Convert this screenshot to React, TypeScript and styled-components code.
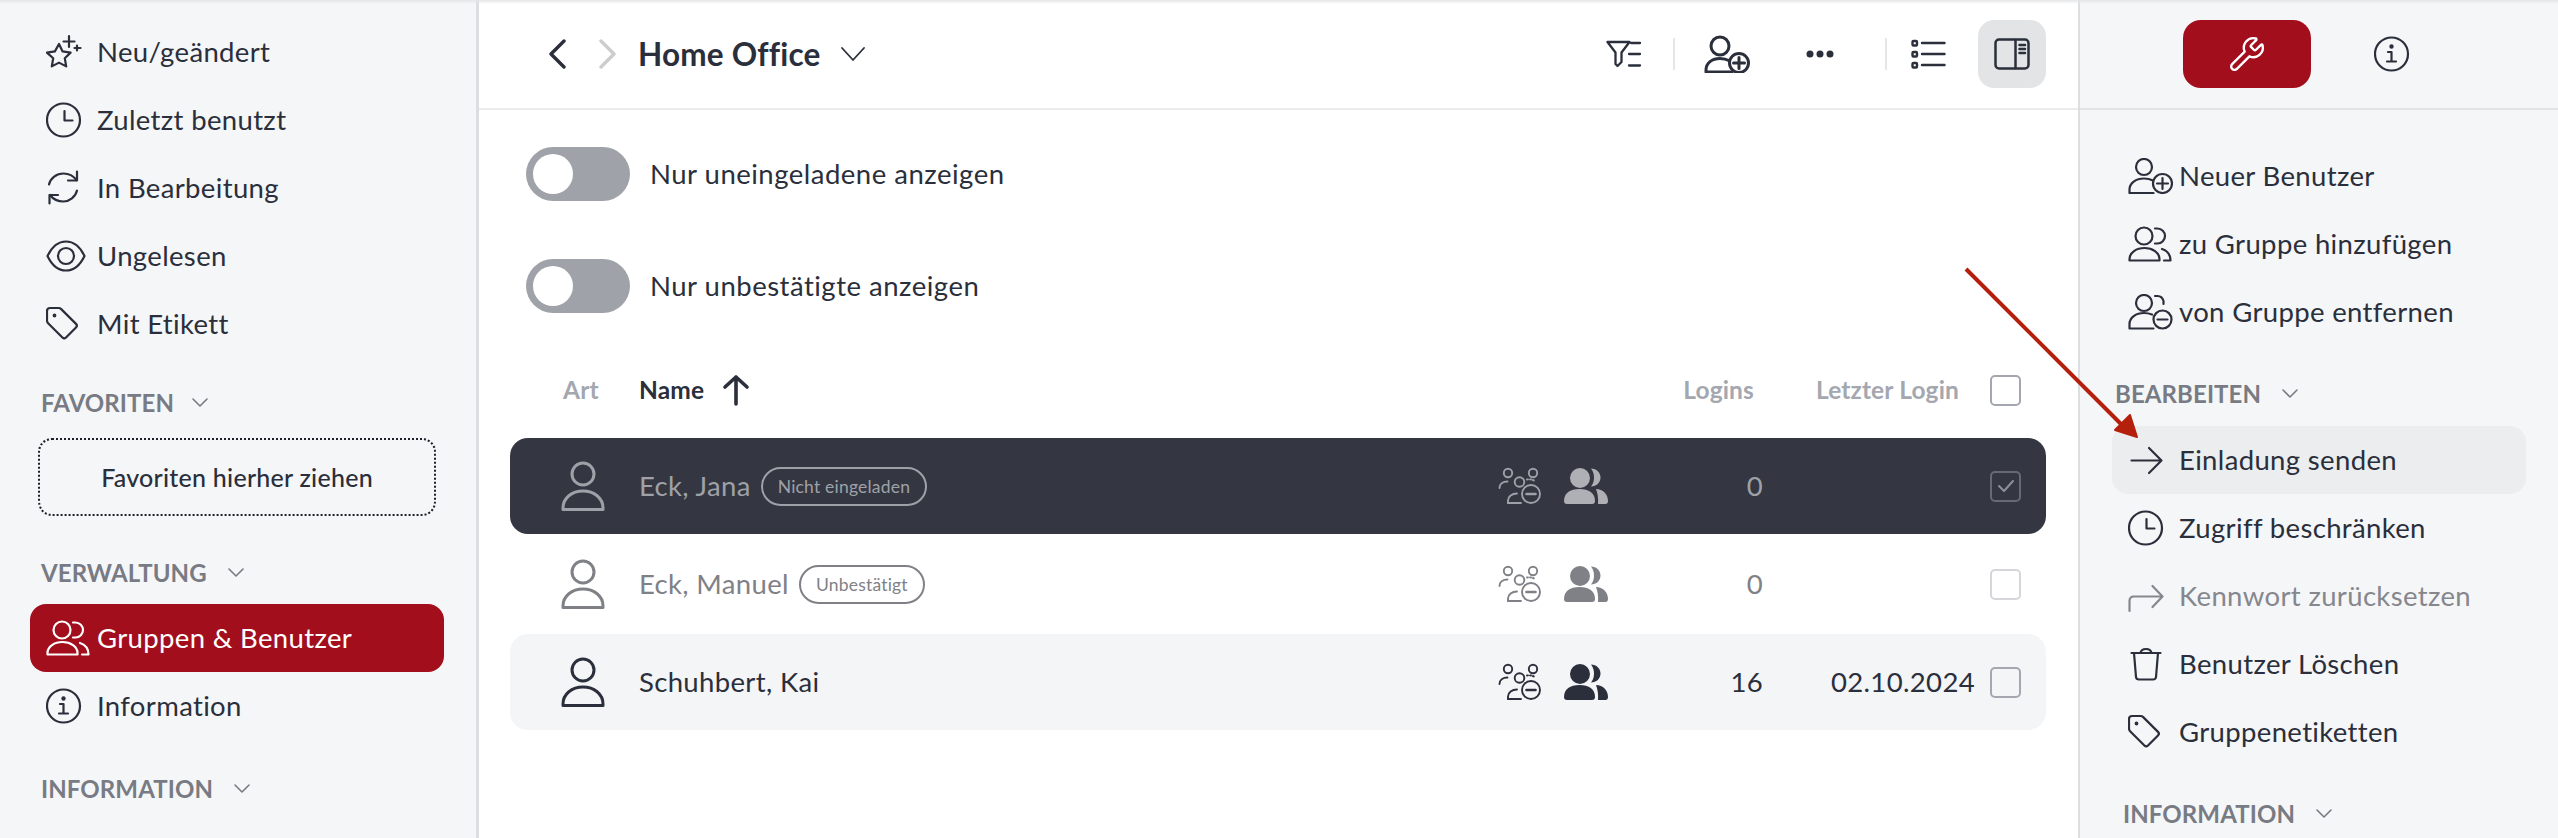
import React from "react";
import styled, { createGlobalStyle } from "styled-components";
import { Wrench } from "lucide-react";

const ink = "#2a2f3b";
const red = "#a30e1d";
const panel = "#f5f6f8";

const Global = createGlobalStyle`
  html, body { margin: 0; padding: 0; height: 100%; background: #fff; overflow: hidden; }
  body { font-family: "Lato", "Open Sans", "Liberation Sans", sans-serif; color: ${ink}; }
  * { box-sizing: border-box; }
  svg { display: block; flex: none; }
`;

const Page = styled.div`
  position: relative;
  display: grid;
  grid-template-columns: 479px 1599px 480px;
  width: 2558px;
  height: 838px;
  overflow: hidden;
`;
const TopShade = styled.div`
  position: absolute;
  left: 0; right: 0; top: 0;
  height: 4px;
  background: linear-gradient(#e4e5e7, rgba(228,229,231,0));
  pointer-events: none;
`;
const ArrowLayer = styled.svg`
  position: absolute;
  left: 1950px; top: 255px;
  pointer-events: none;
`;
const LeftBar = styled.aside`
  background: ${panel};
  border-right: 3px solid #dcdee1;
  padding-top: 18px;
`;
const RightBar = styled.aside`
  background: ${panel};
  border-left: 2px solid #dcdee1;
  padding-left: 2px;
`;
const Main = styled.main`
  background: #fff;
`;
const Item = styled.div<{ $active?: boolean; $hover?: boolean; $muted?: boolean }>`
  display: flex;
  align-items: center;
  height: 68px;
  margin-left: 30px;
  width: 414px;
  padding-left: 16px;
  border-radius: 16px;
  font-size: 27.5px;
  letter-spacing: 0.35px;
  background: ${p => (p.$active ? red : p.$hover ? "#ecedef" : "transparent")};
  color: ${p => (p.$active ? "#fff" : p.$muted ? "#85878d" : ink)};
`;
const ItemLabel = styled.span`
  margin-top: -2px;
`;
const IconBox = styled.span`
  display: flex;
  width: 51px;
  flex: none;
  align-items: center;
  justify-content: flex-start;
`;
const SectionHead = styled.div<{ $top: number; $bottom: number; $x: number; $gap: number }>`
  display: flex;
  align-items: center;
  height: 48px;
  margin: ${p => p.$top}px 0 ${p => p.$bottom}px ${p => p.$x}px;
  font-size: 24px;
  font-weight: 700;
  letter-spacing: 0.1px;
  color: #787b83;
  gap: ${p => p.$gap}px;
`;
const DropZone = styled.div`
  display: flex;
  align-items: center;
  justify-content: center;
  width: 398px;
  height: 78px;
  margin-left: 38px;
  border: 2.5px dotted #1d2029;
  border-radius: 14px;
  font-size: 25px;
  font-weight: 500;
  letter-spacing: 0.25px;
`;
const Header = styled.header`
  display: flex;
  align-items: center;
  height: 110px;
  padding-left: 69px;
  padding-right: 32px;
  border-bottom: 2px solid #ebebec;
`;
const Title = styled.h1`
  margin: 0 20px 0 21px;
  font-size: 31.5px;
  font-weight: 700;
  letter-spacing: 0.2px;
`;
const Nav = styled.span<{ $gap?: number; $color: string }>`
  margin-left: ${p => p.$gap ?? 0}px;
  color: ${p => p.$color};
`;
const Tools = styled.div`
  display: flex;
  align-items: center;
  margin-left: auto;
`;
const Tool = styled.span<{ $gap: number }>`
  display: flex;
  margin-left: ${p => p.$gap}px;
`;
const ToolSep = styled.span<{ $gap: number }>`
  width: 2px;
  height: 32px;
  margin-left: ${p => p.$gap}px;
  background: #e4e5e7;
`;
const ToolActive = styled.span<{ $gap: number }>`
  display: flex;
  align-items: center;
  justify-content: center;
  width: 68px;
  height: 68px;
  margin-left: ${p => p.$gap}px;
  border-radius: 16px;
  background: #e3e4e6;
`;
const Toggles = styled.div`
  display: flex;
  flex-direction: column;
  gap: 58px;
  padding: 37px 0 0 47px;
`;
const ToggleRow = styled.label`
  display: flex;
  align-items: center;
  gap: 20px;
  font-size: 27.5px;
  letter-spacing: 0.5px;
`;
const ToggleText = styled.span`
  margin-top: -2px;
`;
const Track = styled.span`
  display: flex;
  align-items: center;
  width: 104px;
  height: 54px;
  padding-left: 7px;
  border-radius: 27px;
  background: #9fa2a8;
`;
const Knob = styled.span`
  width: 40px;
  height: 40px;
  border-radius: 50%;
  background: #fff;
`;
const Table = styled.div`
  margin: 53px 32px 0 31px;
  display: flex;
  flex-direction: column;
`;
const cols = "129px 1fr 127px 138px 212px 46px";
const HeadRow = styled.div`
  display: grid;
  grid-template-columns: ${cols};
  align-items: center;
  height: 48px;
  margin-bottom: 24px;
  padding-right: 25px;
  font-size: 24.5px;
  font-weight: 700;
  letter-spacing: 0.15px;
  color: #a4a7af;
`;
const HeadArt = styled.span`
  padding-left: 53px;
  margin-top: -2px;
`;
const HeadName = styled.span`
  display: flex;
  align-items: center;
  gap: 18px;
  color: ${ink};
  grid-column: 2 / 4;
`;
const HeadNameText = styled.span`
  margin-top: -2px;
`;
const HeadNum = styled.span<{ $pad: number }>`
  text-align: right;
  padding-right: ${p => p.$pad}px;
  margin-top: -2px;
  white-space: nowrap;
`;
const Row = styled.div<{ $bg: string; $color: string }>`
  display: grid;
  grid-template-columns: ${cols};
  align-items: center;
  height: 96px;
  margin-bottom: 2px;
  padding-right: 25px;
  border-radius: 18px;
  background: ${p => p.$bg};
  color: ${p => p.$color};
  font-size: 27.5px;
  letter-spacing: 0.35px;
`;
const RowIcon = styled.span`
  padding-left: 51px;
`;
const NameCell = styled.span`
  display: flex;
  align-items: center;
  gap: 10px;
`;
const NameText = styled.span`
  margin-top: -2px;
`;
const Tag = styled.span`
  display: inline-flex;
  align-items: center;
  height: 39px;
  padding: 0 15px;
  border: 2px solid currentColor;
  border-radius: 20px;
  font-size: 17.5px;
  letter-spacing: 0.2px;
`;
const GroupCell = styled.span`
  display: flex;
  align-items: center;
  gap: 22px;
`;
const FilledGroup = styled.span<{ $color: string }>`
  color: ${p => p.$color};
`;
const Num = styled.span`
  text-align: right;
  margin-top: -2px;
`;
const CheckCell = styled.span`
  display: flex;
  justify-content: flex-end;
`;
const Box = styled.span<{ $border: string }>`
  display: flex;
  align-items: center;
  justify-content: center;
  width: 31px;
  height: 31px;
  border: 2.5px solid ${p => p.$border};
  border-radius: 5px;
  color: ${p => p.$border};
`;
const Tabs = styled.div`
  display: flex;
  align-items: center;
  height: 110px;
  padding-left: 101px;
  gap: 63px;
  margin-left: -2px;
  border-bottom: 2px solid #e3e4e6;
  margin-bottom: 32px;
`;
const TabActive = styled.span`
  display: flex;
  align-items: center;
  justify-content: center;
  width: 128px;
  height: 68px;
  margin-left: 2px;
  border-radius: 18px;
  background: ${red};
  color: #fff;
`;

const S: React.FC<{ w: number; h: number; sw?: number; children: React.ReactNode }> = ({ w, h, sw = 2.2, children }) => (
  <svg width={w} height={h} viewBox={`0 0 ${w} ${h}`} fill="none" stroke="currentColor" strokeWidth={sw} strokeLinecap="round" strokeLinejoin="round">{children}</svg>
);
const Chevron = () => (
  <svg width="16" height="9" viewBox="0 0 16 9" fill="none" stroke="#787b83" strokeWidth="1.6" strokeLinecap="round" strokeLinejoin="round"><path d="M1 1l7 7 7-7" /></svg>
);
const StarI = () => (
  <S w={36} h={36}>
    <path d="M13 10l3.600 7.400 8 1.200-5.800 5.700 1.400 8.100-7.200-3.800-7.200 3.800 1.400-8.100L.9 18.600l8-1.200z" />
    <path d="M23 2v11M17.500 7.500h11M31 11.500v5M28.500 14h6" />
  </S>
);
const ClockI = () => (
  <S w={36} h={36}>
    <circle cx="17.500" cy="18" r="16.500" />
    <path d="M18.500 9v9.500h8" />
  </S>
);
const SyncI = () => (
  <S w={36} h={36}>
    <path d="M3 14.500C4.500 8 10.500 3.500 17.500 3.500c5.500 0 10 2.500 13 6.500" />
    <path d="M31 1.500V10.500H22" />
    <path d="M31 20.500c-1.500 6.500-7.500 11-13.500 11-5.500 0-10.500-2.500-13.500-6.500" />
    <path d="M3.500 33.500V25H12" />
  </S>
);
const EyeI = () => (
  <S w={40} h={32}>
    <path d="M1.500 16C6 6.500 12.500 1.500 20 1.500S34 6.500 38.500 16C34 25.500 27.500 30.500 20 30.500S6 25.500 1.500 16z" />
    <circle cx="20" cy="16" r="8" />
  </S>
);
const TagI = () => (
  <S w={36} h={36}>
    <path d="M4 2h8.500c1 0 2 .4 2.700 1.100l14.800 14.800c1 1 1 2.600 0 3.600L20 31.500c-1 1-2.600 1-3.600 0L2.100 17.200C1.400 16.500 1 15.500 1 14.500V5c0-1.700 1.300-3 3-3z" />
    <circle cx="8.500" cy="9.500" r="0.800" fill="currentColor" />
  </S>
);
const GroupI = () => (
  <S w={44} h={36}>
    <circle cx="16" cy="10" r="8.500" />
    <path d="M27 2.500h2.500a7.500 7.500 0 0 1 0 15H27" />
    <path d="M1.500 33c0-6.500 7-11 15-11s15 4.500 15 11v1.500h-30z" />
    <path d="M34 23c4.500 1.500 8.500 5 8.500 11.500H36" />
  </S>
);
const InfoI = () => (
  <S w={36} h={36}>
    <circle cx="17.500" cy="18" r="16.500" />
    <circle cx="17.500" cy="10.500" r="1.100" fill="currentColor" />
    <path d="M14 16h3.500v9M13 25.500h9" />
  </S>
);
const UserPlusI = () => (
  <S w={45} h={36}>
    <circle cx="16" cy="9" r="8" />
    <path d="M25 22.500c-3-1.500-5.500-2-9-2-8 0-14.500 4.500-14.500 11v3.500h24" />
    <circle cx="34.500" cy="25.500" r="9.500" fill={panel} />
    <path d="M34.500 20v11M29 25.500h11" />
  </S>
);
const GroupMinusI = () => (
  <S w={45} h={36}>
    <circle cx="16" cy="9" r="8" />
    <path d="M27 2h2.500a6.500 6.500 0 0 1 6 5v3" />
    <path d="M24 20.500c-2.500-1-5-1.500-8-1.500-8 0-14.500 4.500-14.500 11v4.500h24" />
    <circle cx="34.500" cy="25.500" r="9" />
    <path d="M29.500 25.500h10" />
  </S>
);
const ArrowI = () => (
  <S w={36} h={36}>
    <path d="M3.500 18.500h30M21 6l12.500 12.500L21 31" />
  </S>
);
const ReplyI = () => (
  <S w={36} h={36}>
    <path d="M1.500 33V23c0-3 1.500-4.500 4.500-4.500h28M24.500 8l10 10.500-10 10.500" />
  </S>
);
const TrashI = () => (
  <S w={36} h={36}>
    <path d="M3.500 7h29M6 7l2 24c.2 2 1 2.500 3 2.500h14c2 0 2.800-.5 3-2.500L30 7M12.500 7c.5-3 2-4 5.500-4s5 1 5.500 4" />
  </S>
);
const PersonI = () => (
  <S w={44} h={50} sw={3}>
    <circle cx="22" cy="13" r="11" />
    <path d="M2 47c0-10 9-17 20-17s20 7 20 17v1.500H2z" />
  </S>
);
const SmallGroupMinus = () => (
  <S w={44} h={38} sw={1.9}>
    <circle cx="10" cy="6" r="4.200" />
    <circle cx="35" cy="6" r="4.200" />
    <circle cx="21.500" cy="15" r="4.800" />
    <path d="M1.500 21c0-4 3.500-6.500 8-6.500" />
    <path d="M10 36v-2.500c0-4 4-7 9-7" />
    <path d="M10 36h13" />
    <path d="M29 12.500c3-.5 6 0 8.500 2" strokeDasharray="1 2" />
    <circle cx="33" cy="27" r="9" />
    <path d="M28.500 27h9" strokeWidth="2.600" />
  </S>
);
const GroupFill = () => (
  <svg width="44" height="36" viewBox="0 0 44 36" fill="currentColor">
    <circle cx="16" cy="10" r="10" />
    <path d="M27 .5c5.500 0 9.500 4 9.500 9s-4 9-9.500 9c2-2.500 3-5.500 3-9s-1-6.500-3-9z" />
    <path d="M0 33c0-8 6-12 15.500-12S31 25 31 33c0 2-1 3-3 3H3c-2 0-3-1-3-3z" />
    <path d="M32 21c7 0 12 5 12 12 0 2-1 3-2.500 3H34c.5-6-.5-11-2-15z" />
  </svg>
);

const menuLeft: [React.ReactNode, string][] = [
  [<StarI />, "Neu/geändert"],
  [<ClockI />, "Zuletzt benutzt"],
  [<SyncI />, "In Bearbeitung"],
  [<EyeI />, "Ungelesen"],
  [<TagI />, "Mit Etikett"],
];

const Entry: React.FC<{ icon: React.ReactNode; text: string; active?: boolean; hover?: boolean; muted?: boolean }> = ({ icon, text, active, hover, muted }) => (
  <Item $active={active} $hover={hover} $muted={muted}>
    <IconBox>{icon}</IconBox>
    <ItemLabel>{text}</ItemLabel>
  </Item>
);

const people = [
  { name: "Eck, Jana", tag: "Nicht eingeladen", bg: "#343741", color: "#9fa1a8", fill: "#aeb0b5", logins: "0", date: "", box: "#666a74", check: true },
  { name: "Eck, Manuel", tag: "Unbestätigt", bg: "#fff", color: "#7f8187", fill: "#7f8187", logins: "0", date: "", box: "#d5d6d9", check: false },
  { name: "Schuhbert, Kai", tag: "", bg: "#f4f5f7", color: ink, fill: ink, logins: "16", date: "02.10.2024", box: "#a4a7af", check: false },
];

export default function App() {
  return (
    <Page>
      <Global />
      <LeftBar>
        {menuLeft.map(([icon, text]) => (
          <Entry key={text} icon={icon} text={text} />
        ))}
        <SectionHead $top={20} $bottom={12} $x={41} $gap={18}>FAVORITEN <Chevron /></SectionHead>
        <DropZone>Favoriten hierher ziehen</DropZone>
        <SectionHead $top={32} $bottom={8} $x={41} $gap={21}>VERWALTUNG <Chevron /></SectionHead>
        <Entry icon={<GroupI />} text="Gruppen & Benutzer" active />
        <Entry icon={<InfoI />} text="Information" />
        <SectionHead $top={24} $bottom={0} $x={41} $gap={21}>INFORMATION <Chevron /></SectionHead>
      </LeftBar>
      <Main>
        <Header>
          <Nav $color={ink}>
            <S w={18} h={30} sw={3.4}><path d="M16 2L3 15l13 13" /></S>
          </Nav>
          <Nav $gap={33} $color="#cccdcf">
            <S w={18} h={30} sw={3.4}><path d="M2 2l13 13L2 28" /></S>
          </Nav>
          <Title>Home Office</Title>
          <svg width="24" height="14" viewBox="0 0 24 14" fill="none" stroke={ink} strokeWidth="1.8" strokeLinecap="round" strokeLinejoin="round"><path d="M1 1l11 12L23 1" /></svg>
          <Tools>
            <Tool $gap={0}>
              <S w={36} h={28} sw={2.3}>
                <path d="M1.500 2h22l-8 10.500V22l-4 4-2-2V12.500z" />
                <path d="M25 3h9M23 14h11M23 25.500h11" />
              </S>
            </Tool>
            <ToolSep $gap={31} />
            <Tool $gap={29}>
              <S w={46} h={38} sw={3}>
                <circle cx="16" cy="11" r="9" />
                <path d="M26 26c-3-1.500-6-2.500-10-2.500-8 0-14 4.500-14 11.500v2h26" />
                <circle cx="35" cy="28" r="9.500" fill="#fff" />
                <path d="M35 22.500v11M29.500 28h11" />
              </S>
            </Tool>
            <Tool $gap={56}>
              <svg width="28" height="8" viewBox="0 0 28 8" fill={ink}><circle cx="4" cy="4" r="3.500" /><circle cx="14" cy="4" r="3.500" /><circle cx="24" cy="4" r="3.500" /></svg>
            </Tool>
            <ToolSep $gap={51} />
            <Tool $gap={24}>
              <S w={35} h={30} sw={2.4}>
                <rect x="1.500" y="2" width="4.500" height="4.500" rx="1" />
                <rect x="1.500" y="13" width="4.500" height="4.500" rx="1" />
                <rect x="1.500" y="24" width="4.500" height="4.500" rx="1" />
                <path d="M11 4h22.500M11 15h22.500M11 26h22.500" />
              </S>
            </Tool>
            <ToolActive $gap={32}>
              <S w={36} h={32} sw={2.5}>
                <rect x="1.500" y="1.500" width="33" height="29" rx="3.500" />
                <path d="M21.500 2v28M25.500 7h5.500M25.500 11h5.500M25.500 15h5.500" />
              </S>
            </ToolActive>
          </Tools>
        </Header>
        <Toggles>
          <ToggleRow><Track><Knob /></Track><ToggleText>Nur uneingeladene anzeigen</ToggleText></ToggleRow>
          <ToggleRow><Track><Knob /></Track><ToggleText>Nur unbestätigte anzeigen</ToggleText></ToggleRow>
        </Toggles>
        <Table>
          <HeadRow>
            <HeadArt>Art</HeadArt>
            <HeadName>
              <HeadNameText>Name</HeadNameText>
              <S w={28} h={32} sw={3.6}><path d="M14 30V3M3 13L14 3l11 10" /></S>
            </HeadName>
            <HeadNum $pad={9}>Logins</HeadNum>
            <HeadNum $pad={16}>Letzter Login</HeadNum>
            <CheckCell><Box $border="#a4a7af" /></CheckCell>
          </HeadRow>
          {people.map(p => (
            <Row key={p.name} $bg={p.bg} $color={p.color}>
              <RowIcon><PersonI /></RowIcon>
              <NameCell><NameText>{p.name}</NameText>{p.tag && <Tag>{p.tag}</Tag>}</NameCell>
              <GroupCell>
                <SmallGroupMinus />
                <FilledGroup $color={p.fill}><GroupFill /></FilledGroup>
              </GroupCell>
              <Num>{p.logins}</Num>
              <Num>{p.date}</Num>
              <CheckCell>
                <Box $border={p.box}>
                  {p.check && (
                    <svg width="18" height="14" viewBox="0 0 18 14" fill="none" stroke="#8d9097" strokeWidth="2" strokeLinecap="round" strokeLinejoin="round"><path d="M2 7l5 5 9-10" /></svg>
                  )}
                </Box>
              </CheckCell>
            </Row>
          ))}
        </Table>
      </Main>
      <RightBar>
        <Tabs>
          <TabActive><Wrench size={38} strokeWidth={1.5} /></TabActive>
          <InfoI />
        </Tabs>
        <Entry icon={<UserPlusI />} text="Neuer Benutzer" />
        <Entry icon={<GroupI />} text="zu Gruppe hinzufügen" />
        <Entry icon={<GroupMinusI />} text="von Gruppe entfernen" />
        <SectionHead $top={23} $bottom={9} $x={33} $gap={21}>BEARBEITEN <Chevron /></SectionHead>
        <Entry hover icon={<ArrowI />} text="Einladung senden" />
        <Entry icon={<ClockI />} text="Zugriff beschränken" />
        <Entry muted icon={<ReplyI />} text="Kennwort zurücksetzen" />
        <Entry icon={<TrashI />} text="Benutzer Löschen" />
        <Entry icon={<TagI />} text="Gruppenetiketten" />
        <SectionHead $top={23} $bottom={0} $x={41} $gap={21}>INFORMATION <Chevron /></SectionHead>
      </RightBar>
      <TopShade />
      <ArrowLayer width="200" height="200" viewBox="0 0 200 200">
        <path d="M16 14L172 170" stroke="#b5200d" strokeWidth="4" fill="none" />
        <path d="M187 182L165 175L180 160Z" fill="#b5200d" stroke="#b5200d" strokeWidth="2" strokeLinejoin="round" />
      </ArrowLayer>
    </Page>
  );
}
